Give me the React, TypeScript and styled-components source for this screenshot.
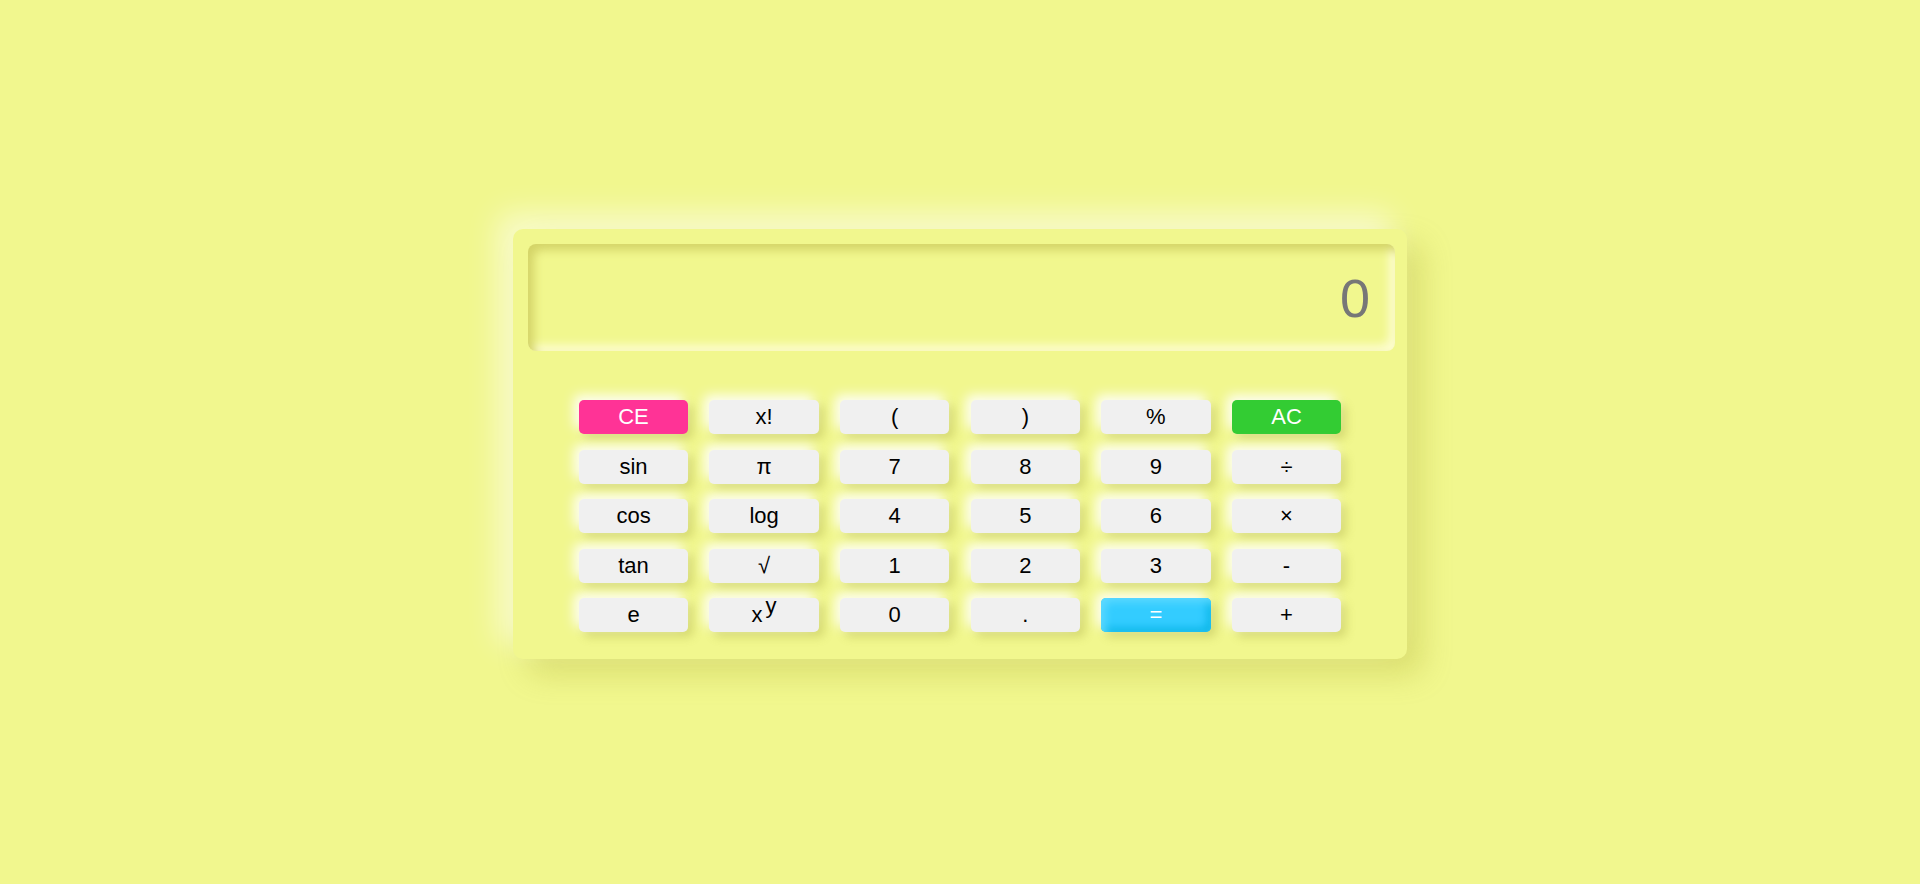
import React from "react";
import styled, { createGlobalStyle } from "styled-components";

const Global = createGlobalStyle`
  html, body { margin: 0; padding: 0; background: #f1f78e; }
  body { font-family: "Liberation Sans", Arial, sans-serif; }
`;

const Page = styled.div`
  min-height: 100vh;
  display: flex;
  align-items: center;
  justify-content: center;
  background: #f1f78e;
`;

const Body = styled.div`
  width: 894px;
  height: 430px;
  box-sizing: border-box;
  margin-top: 4px;
  padding: 15px 12px 0 15px;
  border-radius: 10px;
  background: #f1f78e;
  box-shadow: -15px -15px 30px rgba(255, 255, 255, 0.55),
    15px 15px 30px rgba(160, 160, 30, 0.28);
  display: flex;
  flex-direction: column;
`;

const Screen = styled.div`
  height: 107px;
  border-radius: 8px;
  background: #f1f78e;
  box-shadow: inset 6px 6px 10px #d4d468, inset -6px -6px 10px #fdfdd0;
  display: flex;
  align-items: center;
  justify-content: flex-end;
  padding-right: 25px;
  font-family: "Liberation Sans", Arial, sans-serif;
  font-size: 54px;
  color: #777777;
`;

const Keys = styled.div`
  margin-top: 49px;
  margin-left: -3px;
  display: grid;
  justify-content: center;
  grid-template-columns: repeat(6, 109.5px);
  grid-auto-rows: 34px;
  column-gap: 21.1px;
  row-gap: 15.6px;
`;

type Kind = "plain" | "ce" | "ac" | "eq";

const bg: Record<Kind, string> = {
  plain: "#f0f0f0",
  ce: "#ff3396",
  ac: "#33cc33",
  eq: "#33ccff",
};

const Key = styled.button<{ $kind: Kind }>`
  border: none;
  border-radius: 5px;
  padding: 0;
  margin: 0;
  font-family: "Liberation Sans", Arial, sans-serif;
  font-size: 22px;
  color: ${(p) => (p.$kind === "plain" ? "#000" : "#fff")};
  background: ${(p) => bg[p.$kind]};
  box-shadow: ${(p) =>
    p.$kind === "eq"
      ? "inset 4px 4px 8px #5fdaff, inset -4px -4px 8px #0bb6e8, -5px -5px 12px rgba(255,255,255,0.9), 5px 5px 10px rgba(150,150,40,0.3)"
      : "-5px -5px 12px rgba(255,255,255,0.9), 5px 5px 10px rgba(150,150,40,0.3)"};
  display: flex;
  align-items: center;
  justify-content: center;
  line-height: 1;
`;

const Sup = styled.span`
  position: relative;
  top: -9px;
  margin-left: 3px;
  font-size: 22px;
`;

type K = { label: React.ReactNode; kind?: Kind };

const keys: K[] = [
  { label: "CE", kind: "ce" },
  { label: "x!" },
  { label: "(" },
  { label: ")" },
  { label: "%" },
  { label: "AC", kind: "ac" },
  { label: "sin" },
  { label: "π" },
  { label: "7" },
  { label: "8" },
  { label: "9" },
  { label: "÷" },
  { label: "cos" },
  { label: "log" },
  { label: "4" },
  { label: "5" },
  { label: "6" },
  { label: "×" },
  { label: "tan" },
  { label: "√" },
  { label: "1" },
  { label: "2" },
  { label: "3" },
  { label: "-" },
  { label: "e" },
  {
    label: (
      <>
        x<Sup>y</Sup>
      </>
    ),
  },
  { label: "0" },
  { label: "." },
  { label: "=", kind: "eq" },
  { label: "+" },
];

export default function App() {
  return (
    <Page>
      <Global />
      <Body>
        <Screen>0</Screen>
        <Keys>
          {keys.map((k, i) => (
            <Key key={i} $kind={k.kind ?? "plain"}>
              {k.label}
            </Key>
          ))}
        </Keys>
      </Body>
    </Page>
  );
}
